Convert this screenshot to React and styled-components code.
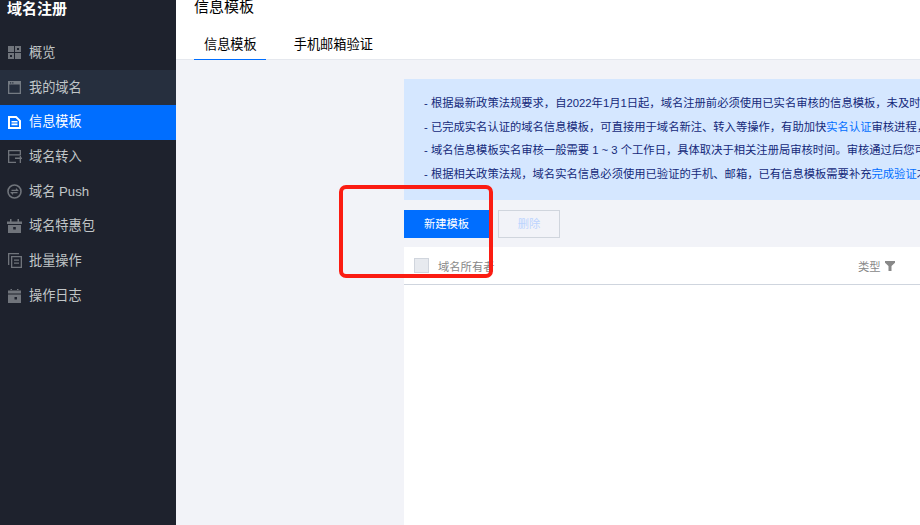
import styled, { createGlobalStyle } from 'styled-components'

const menu = [
	{ name: '概览', icon: 'grid' },
	{ name: '我的域名', icon: 'window', hover: true },
	{ name: '信息模板', icon: 'doc', active: true },
	{ name: '域名转入', icon: 'transfer' },
	{ name: '域名 Push', icon: 'push' },
	{ name: '域名特惠包', icon: 'gift' },
	{ name: '批量操作', icon: 'copy' },
	{ name: '操作日志', icon: 'calendar' },
]

// link is the blue part of the line, after is what follows it
const notices = [
	{ text: '- 根据最新政策法规要求，自2022年1月1日起，域名注册前必须使用已实名审核的信息模板，未及时完成实名审核的域名将无法正常使用' },
	{ text: '- 已完成实名认证的域名信息模板，可直接用于域名新注、转入等操作，有助加快', link: '实名认证', after: '审核进程，建议您提前创建模板' },
	{ text: '- 域名信息模板实名审核一般需要 1 ~ 3 个工作日，具体取决于相关注册局审核时间。审核通过后您可直接使用该模板' },
	{ text: '- 根据相关政策法规，域名实名信息必须使用已验证的手机、邮箱，已有信息模板需要补充', link: '完成验证', after: '才可继续使用' },
]

function MenuIcon({ type }) {
	switch (type) {
		case 'grid':
			return (
				<svg width="13" height="13" viewBox="0 0 13 13" fill="currentColor">
					<path d="M0 0h6v6H0zM7 0h6v6H7zM9 2v2h2V2zM0 7h6v6H0zM2 9v2h2V9zM7 7h6v6H7z" fillRule="evenodd" />
				</svg>
			)
		case 'window':
			return (
				<svg width="13" height="13" viewBox="0 0 13 13" fill="currentColor">
					<path d="M0 0h13v13H0zM1.300 3.500v8.200h10.400V3.500zM2 1.200v1.200h1.200V1.200zM4.200 1.200v1.200h1.200V1.200z" fillRule="evenodd" />
				</svg>
			)
		case 'doc':
			return (
				<svg width="13" height="13" viewBox="0 0 13 13" fill="currentColor">
					<path d="M0 0h8.500L13 4.500V13H0zM2 2v9h9V5.300L7.700 2z" fillRule="evenodd" />
					<path d="M3.500 5h6v1.600h-6zM3.500 7.600h6v1.600h-6z" />
				</svg>
			)
		case 'transfer':
			return (
				<svg width="14" height="13" viewBox="0 0 14 13" fill="currentColor">
					<path d="M0 0h13v5.500H1.300v6.200H8V13H0zM1.300 1.300v2.900h10.400V1.300zM7 7.500h7V9H7zM11.700 6h1.300v1.500h-1.300zM11.700 9H13v4h-1.300z" fillRule="evenodd" />
				</svg>
			)
		case 'push':
			return (
				<svg width="15" height="15" viewBox="0 0 15 15" fill="none" stroke="currentColor">
					<circle cx="7.500" cy="7.500" r="6.500" strokeWidth="1.600" />
					<path d="M4.500 6.300h6L9 4.700M10.500 8.700h-6L6 10.300" strokeWidth="1.200" />
				</svg>
			)
		case 'gift':
			return (
				<svg width="15" height="14" viewBox="0 0 15 14" fill="currentColor">
					<path d="M0 2.500h15V5H0zM1 6h13v8H1zM6.200 8v2.500h2.600V8zM3 0h1.500v2.500H3zM10.500 0H12v2.500h-1.500z" fillRule="evenodd" />
				</svg>
			)
		case 'copy':
			return (
				<svg width="14" height="15" viewBox="0 0 14 15" fill="currentColor">
					<path d="M0 0h11v1.300H1.300V12H0zM3 3h11v12H3zM4.300 4.300v9.400h8.400V4.300zM6 6.500h5v1.300H6zM6 9.500h5v1.300H6z" fillRule="evenodd" />
				</svg>
			)
		default:
			return (
				<svg width="13" height="14" viewBox="0 0 13 14" fill="currentColor">
					<path d="M0 1.500h13V4.500H0zM0 5.500h13V14H0zM6.500 8v2.500H9V8zM2.500 0H4v2H2.500zM9 0h1.500v2H9z" fillRule="evenodd" />
				</svg>
			)
	}
}

function App() {
	return (
		<>
			<GlobalStyle />
			<Page>
				<Sidebar>
					<Brand>域名注册</Brand>
					<MenuList>
						{menu.map(item => (
							<MenuItem key={item.name} $active={item.active} $hover={item.hover}>
								<IconSlot $active={item.active}>
									<MenuIcon type={item.icon} />
								</IconSlot>
								<MenuLabel>{item.name}</MenuLabel>
							</MenuItem>
						))}
					</MenuList>
				</Sidebar>
				<Main>
					<Header>
						<PageTitle>信息模板</PageTitle>
						<Tabs>
							<Tab $active>信息模板</Tab>
							<Tab>手机邮箱验证</Tab>
						</Tabs>
					</Header>
					<Content>
						<Notice>
							{notices.map((line, idx) => (
								<NoticeLine key={idx}>
									{line.text}
									{line.link && <NoticeLink>{line.link}</NoticeLink>}
									{line.after}
								</NoticeLine>
							))}
						</Notice>
						<Actions>
							<PrimaryBtn>新建模板</PrimaryBtn>
							<DisabledBtn>删除</DisabledBtn>
						</Actions>
						<Table>
							<TableHead>
								<CheckBox />
								<OwnerCol>域名所有者</OwnerCol>
								<TypeCol>
									类型
									<svg width="10" height="10" viewBox="0 0 10 10" fill="#888">
										<path d="M0 0h10v1.800L6.500 5v5h-3V5L0 1.800z" />
									</svg>
								</TypeCol>
							</TableHead>
						</Table>
					</Content>
				</Main>
				<Marker />
			</Page>
		</>
	)
}

const GlobalStyle = createGlobalStyle`
	html, body {
		margin: 0;
		padding: 0;
		background: #f2f3f8;
	}
	* {
		box-sizing: border-box;
	}
`

const Page = styled.div`
	position: relative;
	display: flex;
	width: 920px;
	height: 525px;
	overflow: hidden;
	font-family: 'Liberation Sans', 'Noto Sans CJK SC', sans-serif;
`

const Sidebar = styled.div`
	flex: none;
	width: 176px;
	background-color: #1e222d;
`

const Brand = styled.div`
	height: 34px;
	padding: 0px 0px 0px 7px;
	line-height: 17px;
	font-size: 15px;
	font-weight: 700;
	color: #ffffff;
`

const MenuList = styled.div`
	display: flex;
	flex-direction: column;
	margin-top: 1.5px;
`

const MenuItem = styled.div`
	display: flex;
	align-items: center;
	height: 34.7px;
	font-size: 13.2px;
	color: ${props => (props.$active ? '#ffffff' : '#c1c6c8')};
	background-color: ${props => (props.$active ? '#006eff' : props.$hover ? '#262f3e' : 'transparent')};
`

const IconSlot = styled.span`
	display: flex;
	align-items: center;
	justify-content: center;
	flex: none;
	width: 15px;
	margin: 0px 7px;
	opacity: ${props => (props.$active ? 1 : 0.5)};
`

const MenuLabel = styled.span`
	margin-bottom: 3px;
`

const Main = styled.div`
	flex: 1;
	display: flex;
	flex-direction: column;
	min-width: 0;
`

const Header = styled.div`
	height: 60px;
	padding-left: 18px;
	background-color: #ffffff;
	border-bottom: 1px solid #e5e8ee;
`

const PageTitle = styled.div`
	height: 28px;
	line-height: 14px;
	font-size: 15px;
	color: #000000;
`

const Tabs = styled.div`
	display: flex;
	gap: 18px;
`

const Tab = styled.div`
	height: 32px;
	padding: 0px 9px 0px 10px;
	line-height: 34px;
	font-size: 13.2px;
	color: #000000;
	border-bottom: 1px solid ${props => (props.$active ? '#006eff' : 'transparent')};
`

const Content = styled.div`
	flex: 1;
	display: flex;
	flex-direction: column;
	width: 900px;
	padding: 19px 0px 0px 228px;
`

const Notice = styled.div`
	height: 121px;
	padding: 13px 0px 0px 20px;
	background-color: #d5e7ff;
`

const NoticeLine = styled.div`
	height: 23.5px;
	line-height: 23.5px;
	font-size: 11.3px;
	color: #14297a;
	white-space: nowrap;
`

const NoticeLink = styled.span`
	color: #006eff;
`

const Actions = styled.div`
	display: flex;
	gap: 9px;
	margin-top: 10px;
`

const PrimaryBtn = styled.div`
	width: 85px;
	height: 28px;
	line-height: 28px;
	text-align: center;
	font-size: 11.3px;
	color: #ffffff;
	background-color: #006eff;
`

const DisabledBtn = styled.div`
	width: 62px;
	height: 28px;
	line-height: 26px;
	text-align: center;
	font-size: 11.3px;
	color: #bcd4ff;
	background-color: #f2f3f8;
	border: 1px solid #d0d5dd;
`

const Table = styled.div`
	flex: 1;
	margin-top: 9px;
	background-color: #ffffff;
`

const TableHead = styled.div`
	display: flex;
	align-items: center;
	height: 38px;
	padding-left: 10px;
	font-size: 11.3px;
	color: #888888;
	border-bottom: 1px solid #cfd5de;
`

const CheckBox = styled.div`
	flex: none;
	width: 15px;
	height: 15px;
	margin-right: 9px;
	background-color: #e7eaef;
	border: 1px solid #d0d5dd;
`

const OwnerCol = styled.div`
	flex: none;
	width: 420px;
`

const TypeCol = styled.div`
	display: flex;
	align-items: center;
	gap: 4px;
	width: 62px;
`

const Marker = styled.div`
	position: absolute;
	left: 339px;
	top: 185px;
	width: 154px;
	height: 93px;
	border: 4px solid #fb1c12;
	border-radius: 7px;
`

export default App
